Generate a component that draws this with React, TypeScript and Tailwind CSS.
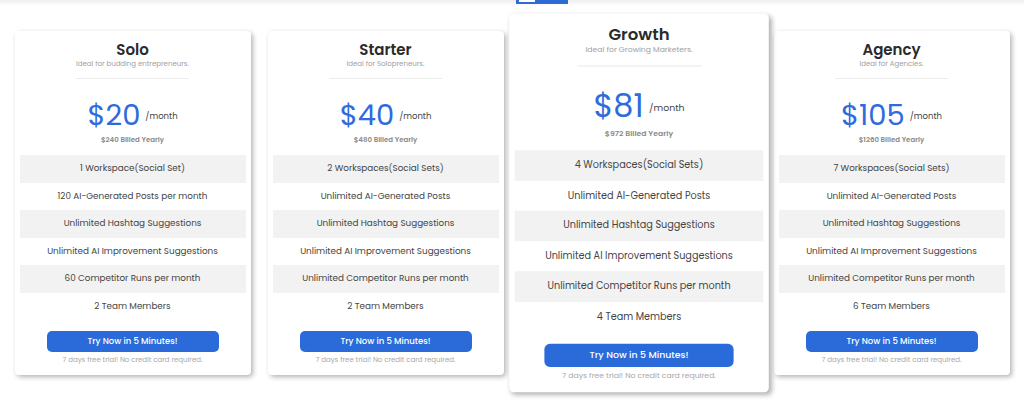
const plans = [
  {
    name: "Solo",
    tagline: "Ideal for budding entrepreneurs.",
    price: "$20",
    yearly: "$240 Billed Yearly",
    features: [
      "1 Workspace(Social Set)",
      "120 AI-Generated Posts per month",
      "Unlimited Hashtag Suggestions",
      "Unlimited AI Improvement Suggestions",
      "60 Competitor Runs per month",
      "2 Team Members",
    ],
  },
  {
    name: "Starter",
    tagline: "Ideal for Solopreneurs.",
    price: "$40",
    yearly: "$480 Billed Yearly",
    features: [
      "2 Workspaces(Social Sets)",
      "Unlimited AI-Generated Posts",
      "Unlimited Hashtag Suggestions",
      "Unlimited AI Improvement Suggestions",
      "Unlimited Competitor Runs per month",
      "2 Team Members",
    ],
  },
  {
    name: "Growth",
    tagline: "Ideal for Growing Marketers.",
    price: "$81",
    yearly: "$972 Billed Yearly",
    featured: true,
    features: [
      "4 Workspaces(Social Sets)",
      "Unlimited AI-Generated Posts",
      "Unlimited Hashtag Suggestions",
      "Unlimited AI Improvement Suggestions",
      "Unlimited Competitor Runs per month",
      "4 Team Members",
    ],
  },
  {
    name: "Agency",
    tagline: "Ideal for Agencies.",
    price: "$105",
    yearly: "$1260 Billed Yearly",
    features: [
      "7 Workspaces(Social Sets)",
      "Unlimited AI-Generated Posts",
      "Unlimited Hashtag Suggestions",
      "Unlimited AI Improvement Suggestions",
      "Unlimited Competitor Runs per month",
      "6 Team Members",
    ],
  },
];

type Plan = (typeof plans)[number] & { featured?: boolean };

function PlanCard({ plan }: { plan: Plan }) {
  return (
    <div
      className={
        "w-[236px] bg-white rounded-[4px] shadow-[2px_2px_5px_rgba(0,0,0,0.3)] px-[5px] pt-[8px] pb-[10px] flex flex-col items-center " +
        (plan.featured ? "scale-110 relative z-10" : "")
      }
    >
      <h3 className="text-[15px] leading-[21px] font-semibold text-[#2b2b2b]">{plan.name}</h3>
      <p className="text-[7px] leading-[10px] text-[#a0a0a0] -mt-px">{plan.tagline}</p>
      <div className="w-[113px] h-px bg-[#ececec] mt-[9px]" />
      <div className="flex items-center mt-[21px] h-[30px]">
        <span className="text-[29px] leading-[30px] text-[#2f6bdc]">{plan.price}</span>
        <span className="text-[8.5px] text-[#444] ml-[5px] mt-[2px]">/month</span>
      </div>
      <p className="text-[7px] leading-[10px] font-semibold text-[#8a8a8a] mt-[5px]">{plan.yearly}</p>
      <ul className="w-full mt-[10px]">
        {plan.features.map((f, i) => (
          <li
            key={f}
            className={
              "h-[27.5px] flex items-center justify-center text-[8.8px] text-[#444] " +
              (i % 2 === 0 ? "bg-[#f2f2f2]" : "bg-white")
            }
          >
            {f}
          </li>
        ))}
      </ul>
      <button className="mt-[11px] w-[172px] h-[21px] rounded-[5px] bg-[#2a6bd9] text-white text-[8.5px] font-medium">
        Try Now in 5 Minutes!
      </button>
      <p className="text-[7px] leading-[10px] text-[#a8a8a8] mt-[3px]">7 days free trial! No credit card required.</p>
    </div>
  );
}

export default function App() {
  return (
    <div className="w-[1024px] h-[403px] bg-white overflow-hidden font-['Poppins','Inter',sans-serif]">
      <div className="h-[6px] bg-gradient-to-b from-[#eeeeee] to-white pl-[516px]">
        <div className="w-[52px] h-[4px] bg-[#2f6bd6] pl-[3px]">
          <div className="w-[16px] h-[2px] bg-white" />
        </div>
      </div>
      <div className="flex justify-center items-start gap-[17px] pt-[25px]">
        {plans.map((p) => (
          <PlanCard key={p.name} plan={p as Plan} />
        ))}
      </div>
    </div>
  );
}
